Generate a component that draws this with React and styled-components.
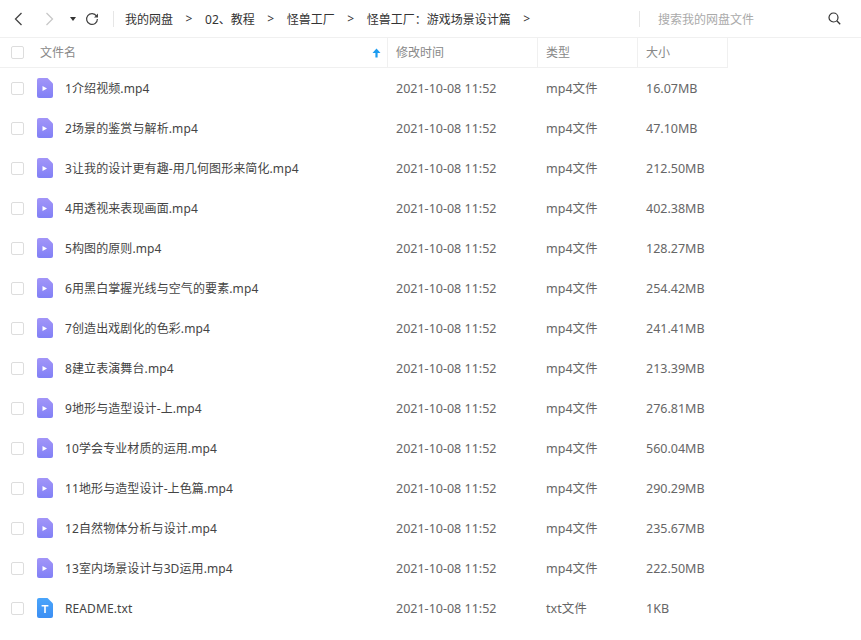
import React from 'react'
import styled, { createGlobalStyle } from 'styled-components'

const GlobalStyle = createGlobalStyle`
html,body{
margin:0;
padding:0;
background:#fff;
overflow:hidden;
}
body{
font-family:"Noto Sans","Noto Sans CJK SC",sans-serif;
font-size:12.5px;
color:#666;
}
`

const crumbs = ['我的网盘', '02、教程', '怪兽工厂', '怪兽工厂：游戏场景设计篇']

const files = [
  ['1介绍视频.mp4', '16.07MB'],
  ['2场景的鉴赏与解析.mp4', '47.10MB'],
  ['3让我的设计更有趣-用几何图形来简化.mp4', '212.50MB'],
  ['4用透视来表现画面.mp4', '402.38MB'],
  ['5构图的原则.mp4', '128.27MB'],
  ['6用黑白掌握光线与空气的要素.mp4', '254.42MB'],
  ['7创造出戏剧化的色彩.mp4', '241.41MB'],
  ['8建立表演舞台.mp4', '213.39MB'],
  ['9地形与造型设计-上.mp4', '276.81MB'],
  ['10学会专业材质的运用.mp4', '560.04MB'],
  ['11地形与造型设计-上色篇.mp4', '290.29MB'],
  ['12自然物体分析与设计.mp4', '235.67MB'],
  ['13室内场景设计与3D运用.mp4', '222.50MB'],
  ['README.txt', '1KB'],
]

const FileIcon = ({ kind }) => {
  const id = kind === 'txt' ? 'txtFill' : 'videoFill'
  return (
    <svg width="16" height="20" viewBox="0 0 16 20">
      <defs>
        <linearGradient id={id} x1="0" y1="0" x2="0" y2="1">
          <stop offset="0" stopColor={kind === 'txt' ? '#4aa5fb' : '#a295f8'} />
          <stop offset="1" stopColor={kind === 'txt' ? '#3b8ef3' : '#8180f6'} />
        </linearGradient>
      </defs>
      <path d="M2 0H10.5L16 5.5V18a2 2 0 0 1-2 2H2a2 2 0 0 1-2-2V2a2 2 0 0 1 2-2Z" fill={`url(#${id})`} />
      {kind === 'txt' ? (
        <path d="M4.6 7H11.4V8.5H8.8V15H7.2V8.5H4.6Z" fill="#fff" />
      ) : (
        <path d="M5.5 8L10 10.5L5.5 13Z" fill="#fff" />
      )}
    </svg>
  )
}

const App = () => {
  return (
    <Page>
      <GlobalStyle />
      <Toolbar>
        <NavGroup>
          <NavButton>
            <svg width="12" height="16" viewBox="0 0 12 16"><path d="M9.5 2L3.5 8L9.5 14" fill="none" stroke="#444" strokeWidth="1.3" /></svg>
          </NavButton>
          <NavButton>
            <svg width="12" height="16" viewBox="0 0 12 16"><path d="M3.5 2L9.5 8L3.5 14" fill="none" stroke="#c8c8c8" strokeWidth="1.3" /></svg>
          </NavButton>
          <Caret />
          <svg width="14" height="14" viewBox="0 0 14 14">
            <path d="M11.6 4.2A5.4 5.4 0 1 0 12.4 7" fill="none" stroke="#444" strokeWidth="1.2" />
            <path d="M13 1.4V5.4H9Z" fill="#444" />
          </svg>
        </NavGroup>
        <Divider />
        <Crumbs>
          {crumbs.map((label) => (
            <Crumb key={label}>
              <span>{label}</span>
              <Arrow>&gt;</Arrow>
            </Crumb>
          ))}
        </Crumbs>
        <SearchBox>
          <Divider />
          <SearchText>搜索我的网盘文件</SearchText>
          <svg width="14" height="14" viewBox="0 0 14 14">
            <circle cx="5.5" cy="5.5" r="4.5" fill="none" stroke="#333" strokeWidth="1.2" />
            <path d="M8.8 8.8L12.2 12.2" stroke="#333" strokeWidth="1.3" />
          </svg>
        </SearchBox>
      </Toolbar>
      <Head>
        <NameHead>
          <Check />
          <HeadLabel $wide>文件名</HeadLabel>
          <svg width="9" height="10" viewBox="0 0 9 10">
            <path d="M4.5 0.5L8.5 5H5.6V9.5H3.4V5H0.5Z" fill="#1c9cf0" />
          </svg>
        </NameHead>
        <HeadCell><HeadLabel>修改时间</HeadLabel></HeadCell>
        <HeadCell><HeadLabel>类型</HeadLabel></HeadCell>
        <HeadCell $last><HeadLabel>大小</HeadLabel></HeadCell>
      </Head>
      {files.map(([name, size]) => {
        const kind = name.endsWith('.txt') ? 'txt' : 'mp4'
        return (
          <Row key={name}>
            <NameCell>
              <Check />
              <FileIcon kind={kind} />
              <FileName>{name}</FileName>
            </NameCell>
            <Cell>2021-10-08 11:52</Cell>
            <Cell>{kind}文件</Cell>
            <Cell>{size}</Cell>
          </Row>
        )
      })}
    </Page>
  )
}

const Page = styled.div`
width:861px;
height:640px;
overflow:hidden;
`
const Toolbar = styled.div`
height:37px;
display:flex;
align-items:center;
border-bottom:1px solid #f0f0f0;
`
const NavGroup = styled.div`
display:flex;
align-items:center;
padding-left:12px;
width:113px;
box-sizing:border-box;
`
const NavButton = styled.div`
width:12px;
height:16px;
margin-right:19px;
display:flex;
`
const Caret = styled.div`
width:0;
height:0;
border-left:3.5px solid transparent;
border-right:3.5px solid transparent;
border-top:4px solid #333;
margin:0 9px 0 -4px;
`
const Divider = styled.div`
width:1px;
height:16px;
background:#e6e6e6;
flex:none;
`
const Crumbs = styled.div`
display:flex;
align-items:center;
padding-left:11px;
flex:1;
color:#333;
font-size:12px;
`
const Crumb = styled.div`
display:flex;
align-items:center;
`
const Arrow = styled.span`
width:32px;
text-align:center;
`
const SearchBox = styled.div`
width:222px;
display:flex;
align-items:center;
`
const SearchText = styled.div`
width:170px;
padding-left:18px;
color:#aaa;
font-size:12px;
`
const Head = styled.div`
height:29px;
width:728px;
display:grid;
grid-template-columns:387px 150px 100px 91px;
border-bottom:1px solid #f0f0f0;
`
const HeadCell = styled.div`
display:flex;
align-items:center;
padding:0 0 2px 8px;
border-left:1px solid #f0f0f0;
${(p) => p.$last && 'border-right:1px solid #f0f0f0;'}
`
const NameHead = styled.div`
display:flex;
align-items:center;
padding:0 6px 0 11px;
`
const HeadLabel = styled.span`
color:#888;
font-size:12px;
flex:1;
${(p) => p.$wide && 'padding:0 0 2px 3px;'}
`
const Check = styled.div`
width:11px;
height:11px;
border:1px solid #ddd;
border-radius:2px;
margin-right:13px;
flex:none;
`
const Row = styled.div`
height:40px;
display:grid;
grid-template-columns:387px 150px 100px 1fr;
align-items:center;
`
const NameCell = styled.div`
display:flex;
align-items:center;
padding-left:11px;
`
const FileName = styled.span`
margin-left:12px;
color:#444;
font-size:12px;
letter-spacing:0.1px;
`
const Cell = styled.div`
padding-left:9px;
height:17px;
line-height:17px;
overflow:hidden;
`

export default App
